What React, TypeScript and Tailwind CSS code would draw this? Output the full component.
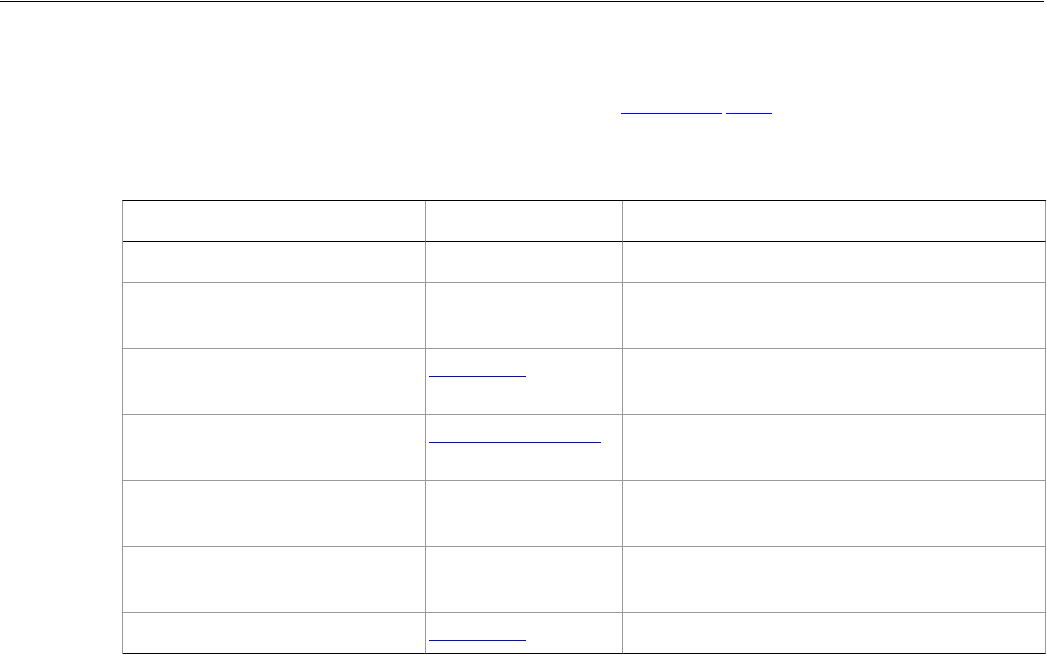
const rows = [
  { h: "h-[41px]", link: 0, last: false },
  { h: "h-[66px]", link: 0, last: false },
  { h: "h-[66px]", link: 97, last: false },
  { h: "h-[66px]", link: 172, last: false },
  { h: "h-[66px]", link: 0, last: false },
  { h: "h-[66px]", link: 0, last: false },
  { h: "h-[41px]", link: 97, last: true },
];

function LinkLine({ width }: { width: number }) {
  // the link text itself renders invisibly in the reference; only its underline shows
  return (
    <span
      className="inline-block h-px bg-[#0000ff]"
      style={{ width }}
      aria-hidden="true"
    />
  );
}

export default function App() {
  return (
    <div className="min-h-screen bg-white font-['Liberation_Sans',Arial,sans-serif] text-[13px] text-black">
      <div className="pt-px">
        <div className="h-px w-[1044px] bg-black" />
      </div>

      {/* intro paragraph with two links */}
      <div className="flex gap-1 pl-[621px] pt-[111px]">
        <LinkLine width={101} />
        <LinkLine width={46} />
      </div>

      {/* table */}
      <div className="ml-[122px] mt-[86px] w-[924px] border-t border-l border-t-black border-l-[#999999]">
        <div className="flex h-[41px]">
          <div className="w-[303px] border-r border-b border-r-[#999999] border-b-black" />
          <div className="w-[197px] border-r border-b border-r-[#999999] border-b-black" />
          <div className="w-[423px] border-r border-b border-r-[#999999] border-b-black" />
        </div>
        {rows.map((row, i) => (
          <div key={i} className={`flex ${row.h}`}>
            <div
              className={`w-[303px] border-r border-b border-r-[#999999] ${
                row.last ? "border-b-black" : "border-b-[#999999]"
              }`}
            />
            <div
              className={`w-[197px] border-r border-b border-r-[#999999] pl-[3px] pt-[27px] ${
                row.last ? "border-b-black" : "border-b-[#999999]"
              }`}
            >
              {row.link > 0 && (
                <div className="flex">
                  <LinkLine width={row.link} />
                </div>
              )}
            </div>
            <div
              className={`w-[423px] border-r border-b border-r-[#999999] ${
                row.last ? "border-b-black" : "border-b-[#999999]"
              }`}
            />
          </div>
        ))}
      </div>
    </div>
  );
}
